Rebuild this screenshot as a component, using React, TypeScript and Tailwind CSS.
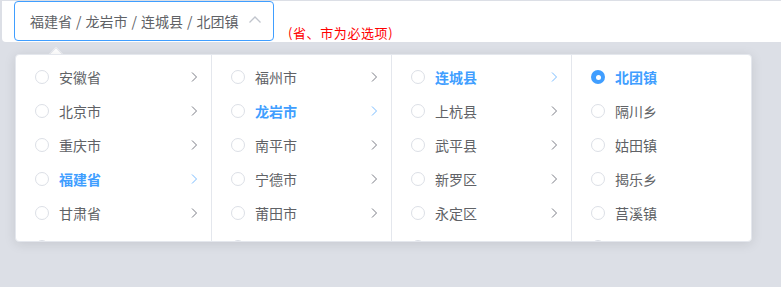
type Node = { label: string; leaf?: boolean };

const columns: { width: string; active: string; items: Node[] }[] = [
    {
        width: 'w-[196px]',
        active: '福建省',
        items: ['安徽省', '北京市', '重庆市', '福建省', '甘肃省', ''].map((label) => ({ label })),
    },
    {
        width: 'w-[180px]',
        active: '龙岩市',
        items: ['福州市', '龙岩市', '南平市', '宁德市', '莆田市', ''].map((label) => ({ label })),
    },
    {
        width: 'w-[180px]',
        active: '连城县',
        items: ['连城县', '上杭县', '武平县', '新罗区', '永定区', ''].map((label) => ({ label })),
    },
    {
        width: 'w-[181px]',
        active: '北团镇',
        items: ['北团镇', '隔川乡', '姑田镇', '揭乐乡', '莒溪镇', ''].map((label) => ({
            label,
            leaf: true,
        })),
    },
];

const path = ['福建省', '龙岩市', '连城县', '北团镇'];

function Radio({ checked }: { checked: boolean }) {
    if (checked) {
        return (
            <span className="flex h-[14px] w-[14px] shrink-0 items-center justify-center rounded-full bg-[#409eff]">
                <span className="h-[5px] w-[5px] rounded-full bg-white" />
            </span>
        );
    }
    return <span className="h-[14px] w-[14px] shrink-0 rounded-full border border-[#dcdfe6] bg-white" />;
}

function Chevron({ active }: { active: boolean }) {
    return (
        <svg width="8" height="12" viewBox="0 0 8 12" className="shrink-0">
            <polyline
                points="2,1.5 6.5,6 2,10.5"
                fill="none"
                stroke={active ? '#79bbff' : '#7a7d85'}
                strokeWidth="1"
            />
        </svg>
    );
}

export default function App() {
    return (
        <div
            className="h-[287px] w-[781px] overflow-hidden bg-[#dcdfe6] pl-[2px] pt-[1px]"
            style={{ fontFamily: '"Helvetica Neue", "Noto Sans CJK SC", "Noto Sans", sans-serif' }}
        >
            {/* top form row */}
            <div className="flex h-[41px] items-start rounded-bl-[4px] bg-white pl-[12px]">
                <div className="flex h-[40px] w-[260px] items-center justify-between rounded-[4px] border border-[#409eff] bg-white pl-[15px] pr-[10px]">
                    <span className="flex text-[14px] leading-none text-[#606266]">
                        {path.map((p, i) => (
                            <span key={p} className="flex">
                                {i > 0 && <span className="px-[4px]">/</span>}
                                {p}
                            </span>
                        ))}
                    </span>
                    <svg width="14" height="14" viewBox="0 0 14 14" className="mr-[1px] mt-[-2px]">
                        <polyline points="1.5,9.5 7,4 12.5,9.5" fill="none" stroke="#c0c4cc" strokeWidth="1.3" />
                    </svg>
                </div>
                <span className="ml-[14px] mt-[23px] text-[13px] leading-[18px] tracking-[0.6px] text-[#ff0000]">
                    (省、市为必选项)
                </span>
            </div>

            {/* dropdown panel */}
            <div className="relative ml-[13px] mt-[12px] w-[737px]">
                <span className="absolute left-[36px] top-[-5px] h-[10px] w-[10px] rotate-45 border-l border-t border-[#e4e7ed] bg-white" />
                <div className="relative flex h-[188px] overflow-hidden rounded-[4px] border border-[#e4e7ed] bg-white shadow-[0_2px_12px_rgba(0,0,0,0.1)]">
                    {columns.map((col, ci) => (
                        <div
                            key={ci}
                            className={`${col.width} shrink-0 pt-[5px] ${
                                ci < columns.length - 1 ? 'border-r border-[#e4e7ed]' : ''
                            }`}
                        >
                            {col.items.map((item, ri) => {
                                const active = item.label === col.active;
                                return (
                                    <div key={ri} className="flex h-[34px] items-center pl-[19px] pr-[13px]">
                                        <Radio checked={active && !!item.leaf} />
                                        <span
                                            className={`ml-[10px] flex-1 text-[14px] leading-none ${
                                                active ? 'font-bold text-[#409eff]' : 'text-[#606266]'
                                            }`}
                                        >
                                            {item.label}
                                        </span>
                                        {!item.leaf && <Chevron active={active} />}
                                    </div>
                                );
                            })}
                        </div>
                    ))}
                </div>
            </div>
        </div>
    );
}
